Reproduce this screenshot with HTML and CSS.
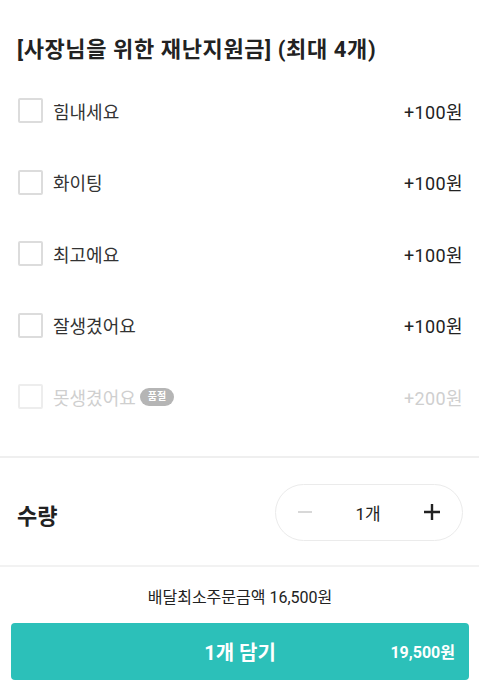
FILE: index.html
```html
<!DOCTYPE html>
<html lang="ko">
<head>
  <meta charset="UTF-8" />
  <meta name="viewport" content="width=device-width, initial-scale=1" />
  <title>옵션 선택</title>
  <link rel="stylesheet" href="styles.css">
</head>
<body>

  <div class="options">
    <h2 class="title">[사장님을 위한 재난지원금] (최대 4개)</h2>
    <ul class="option-list">
      <li class="option"><span class="check"></span><span class="label">힘내세요</span><span class="price">+100원</span></li>
      <li class="option"><span class="check"></span><span class="label">화이팅</span><span class="price">+100원</span></li>
      <li class="option"><span class="check"></span><span class="label">최고에요</span><span class="price">+100원</span></li>
      <li class="option"><span class="check"></span><span class="label">잘생겼어요</span><span class="price">+100원</span></li>
      <li class="option disabled"><span class="check"></span><span class="label">못생겼어요</span><span class="badge">품절</span><span class="price">+200원</span></li>
    </ul>
  </div>

  <div class="qty-row">
    <span class="qty-title">수량</span>
    <div class="stepper">
      <span class="step minus">
        <svg width="16" height="16" viewBox="0 0 16 16"><path d="M1 8h14" stroke="#cfcfcf" stroke-width="1.6"/></svg>
      </span>
      <span class="count">1개</span>
      <span class="step plus">
        <svg width="18" height="18" viewBox="0 0 18 18"><path d="M1 9h16M9 1v16" stroke="#222" stroke-width="2.4"/></svg>
      </span>
    </div>
  </div>

  <div class="footer">
    <p class="min-order">배달최소주문금액 16,500원</p>
    <a class="cart-btn" href="#">
      <span class="cart-label">1개 담기</span>
      <span class="cart-price">19,500원</span>
    </a>
  </div>

</body>
</html>
```

FILE: styles.css
```css
body {
  margin: 0;
  font-family: "Roboto", "Noto Sans CJK KR", "Noto Sans", sans-serif;
  background: #fff;
  color: #222;
}

.options {
  padding: 36px 16px 23px 17px;
  border-bottom: 2px solid #efefef;
}

.title {
  margin: 0;
  font-size: 22px;
  line-height: 28px;
  font-weight: bold;
  letter-spacing: 0.6px;
  color: #222;
}

.option-list {
  list-style: none;
  margin: 11px 0 0;
  padding: 0;
}

.option {
  display: flex;
  align-items: center;
  height: 71.5px;
}

.check {
  width: 21px;
  height: 21px;
  border: 2px solid #dcdcdc;
  border-radius: 2px;
  margin-left: 1px;
}

.label {
  margin-left: 10px;
  font-size: 18px;
  color: #333;
}

.price {
  margin-left: auto;
  font-size: 18px;
  letter-spacing: 0.4px;
  color: #222;
}

.badge {
  margin-left: 4px;
  padding: 0 8px;
  height: 18px;
  line-height: 18px;
  border-radius: 9px;
  background: #b5b5b5;
  color: #fff;
  font-size: 10px;
  font-weight: bold;
}

.disabled .check {
  border-color: #ededed;
}

.disabled .label,
.disabled .price {
  color: #cfcfcf;
}

.qty-row {
  display: flex;
  align-items: center;
  justify-content: space-between;
  padding: 26px 16px 24px 17px;
  border-bottom: 2px solid #f2f2f2;
}

.qty-title {
  font-size: 22px;
  font-weight: bold;
  padding-top: 3px;
}

.stepper {
  display: flex;
  align-items: center;
  justify-content: space-between;
  width: 144px;
  height: 55px;
  border: 1px solid #ebebeb;
  border-radius: 29px;
  padding: 0 21px;
}

.step {
  display: flex;
  align-items: center;
}

.count {
  font-size: 17px;
  color: #222;
}

.footer {
  padding: 0 10px 0 11px;
}

.min-order {
  margin: 0;
  padding: 20px 0 0;
  height: 36px;
  line-height: 22px;
  text-align: center;
  font-size: 16px;
  color: #222;
}

.cart-btn {
  position: relative;
  display: flex;
  align-items: center;
  justify-content: center;
  height: 57px;
  background: #2cc0b9;
  border-radius: 4px;
  color: #fff;
  text-decoration: none;
}

.cart-label {
  font-size: 20px;
  font-weight: bold;
}

.cart-price {
  position: absolute;
  right: 14px;
  font-size: 16px;
  font-weight: bold;
}
```
